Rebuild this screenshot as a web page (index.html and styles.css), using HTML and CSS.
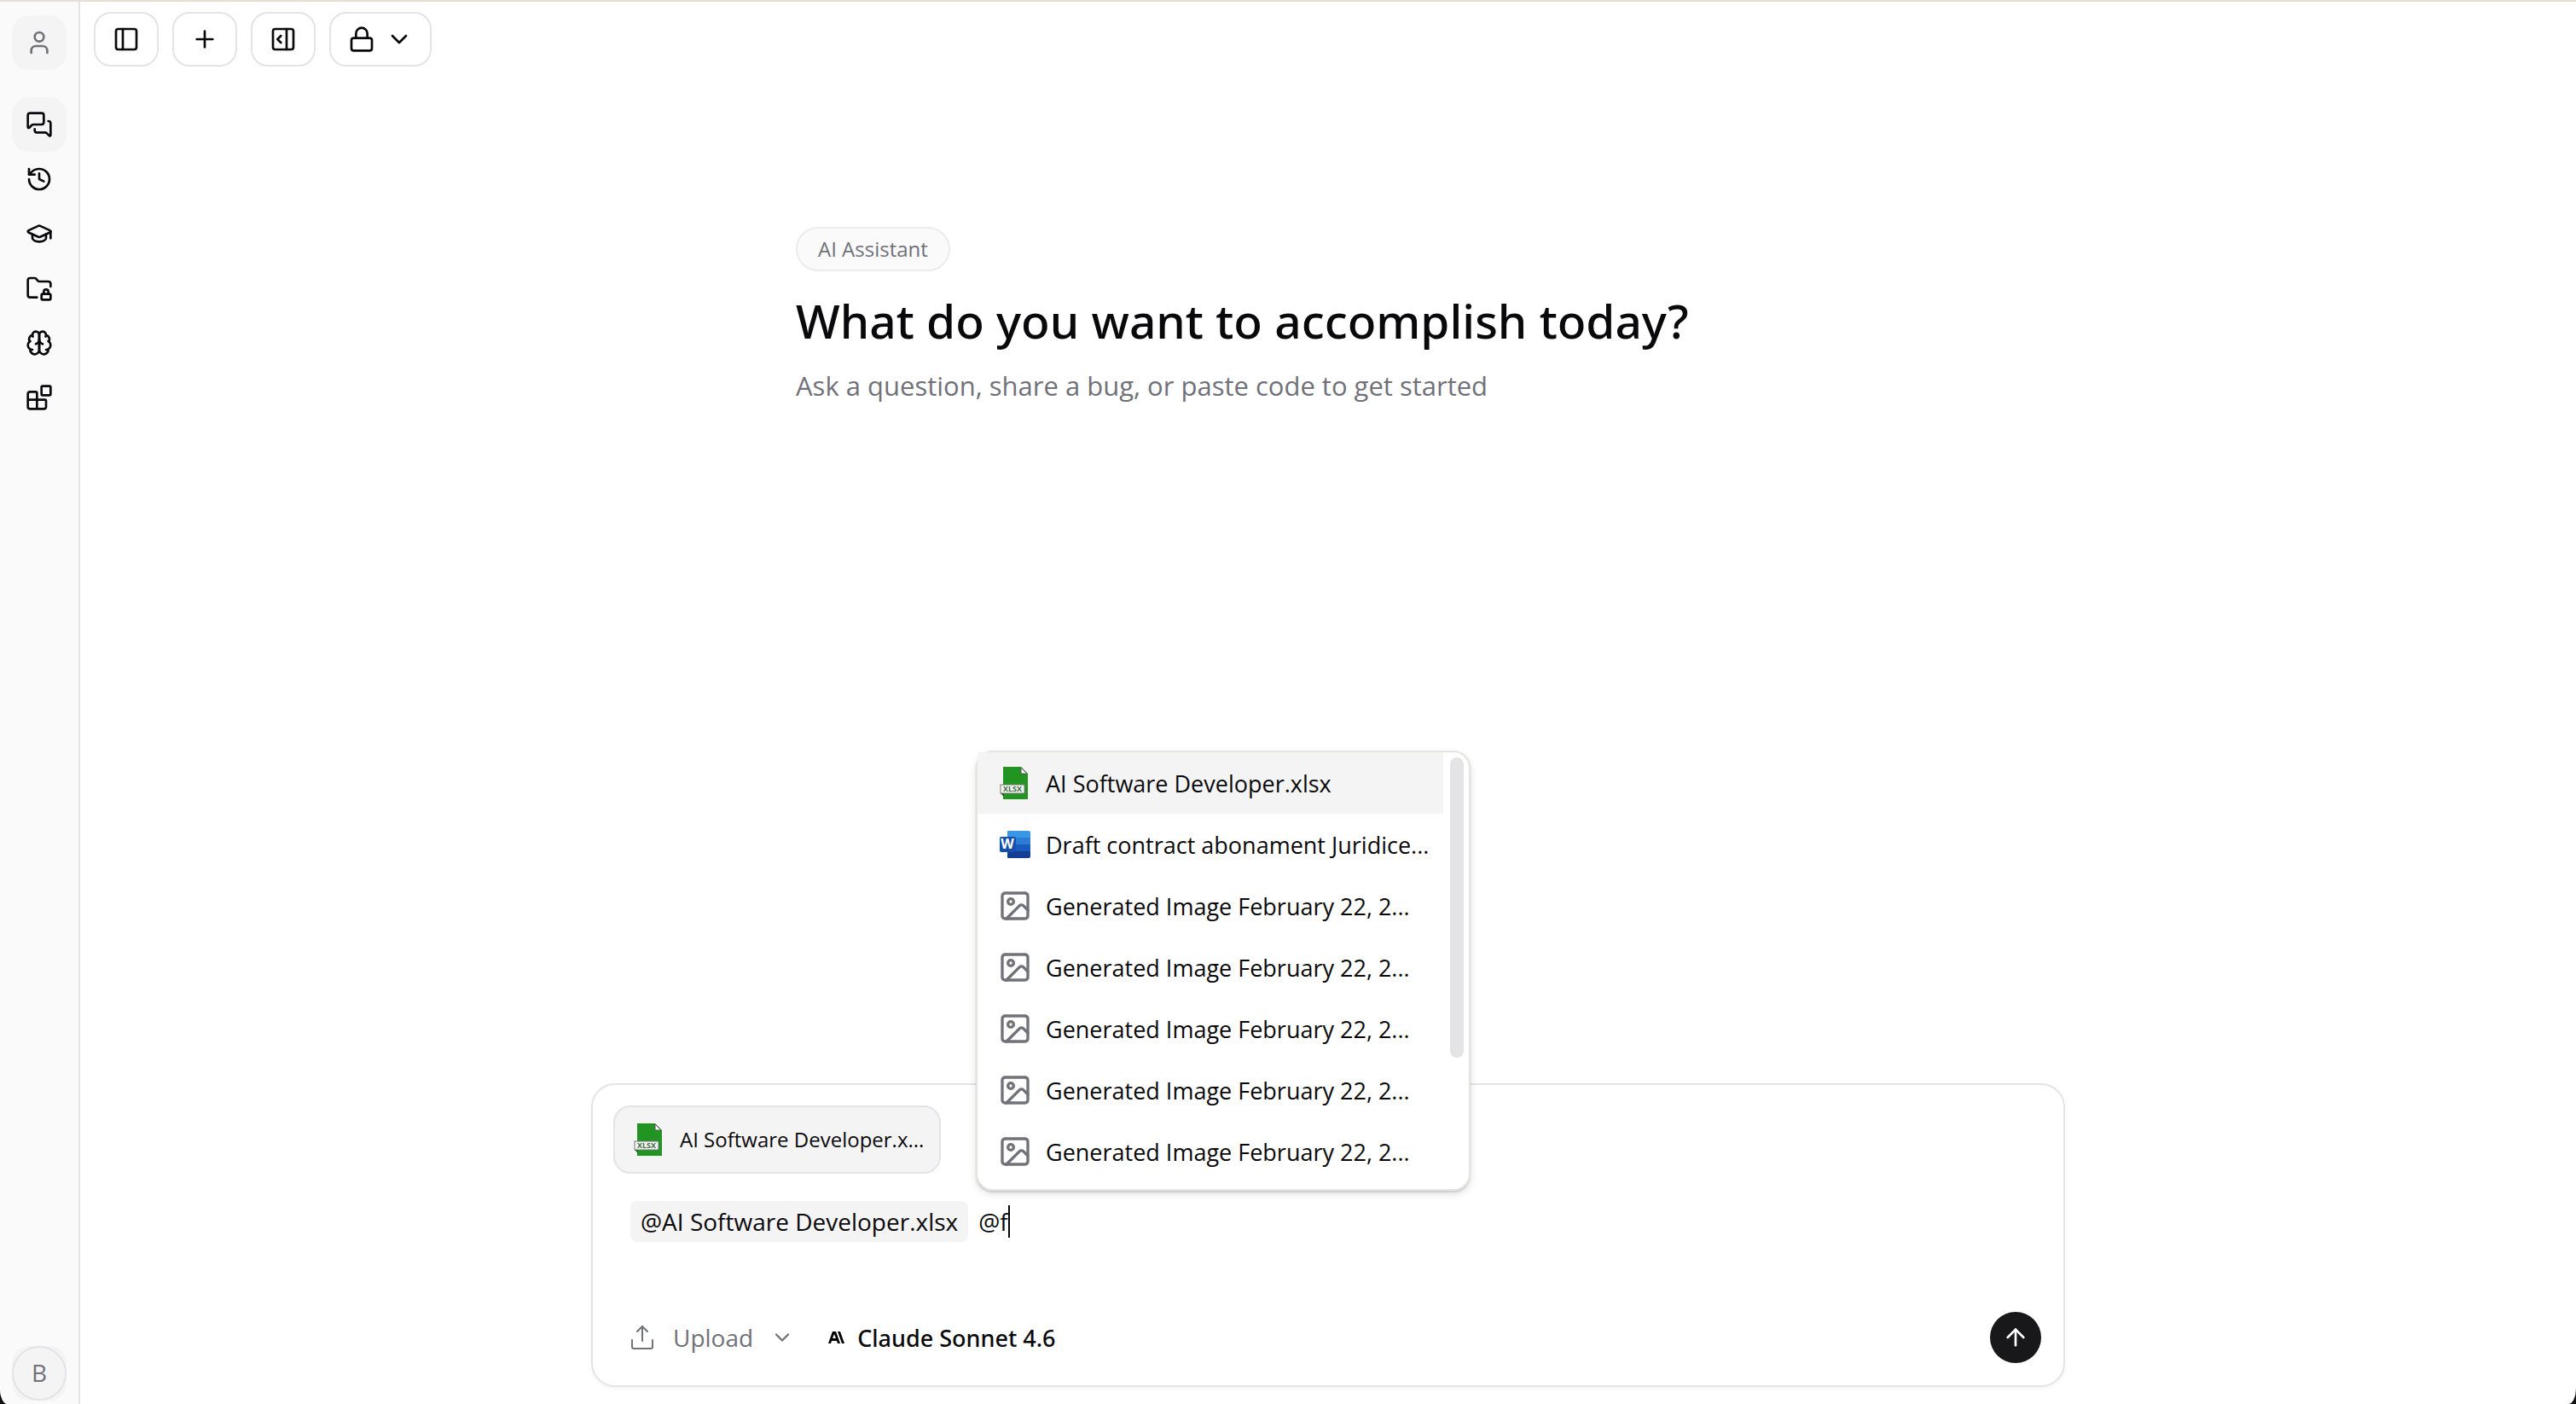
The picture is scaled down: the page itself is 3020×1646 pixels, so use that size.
FILE: index.html
```html
<!DOCTYPE html>
<html lang="en">
<head>
<meta charset="utf-8">
<title>AI Assistant</title>
<link rel="stylesheet" href="styles.css">
</head>
<body>

<!-- shared icons -->
<svg width="0" height="0" class="sprite" aria-hidden="true">
	<symbol id="image" viewBox="0 0 24 24">
		<rect width="18" height="18" x="3" y="3" rx="2"/>
		<circle cx="9" cy="9" r="2"/>
		<path d="m21 15-3.086-3.086a2 2 0 0 0-2.828 0L6 21"/>
	</symbol>
</svg>

<div class="app">
	<nav class="sidebar">
		<button class="side-btn active muted" aria-label="Profile">
			<svg class="icon" viewBox="0 0 24 24"><path d="M19 21v-2a4 4 0 0 0-4-4H9a4 4 0 0 0-4 4v2"/><circle cx="12" cy="7" r="4"/></svg>
		</button>
		<div class="side-menu">
			<a href="#" class="side-btn active" aria-label="Chats">
				<svg class="icon" viewBox="0 0 24 24"><path d="M16 10a2 2 0 0 1-2 2H6.828a2 2 0 0 0-1.414.586l-2.202 2.202A.71.71 0 0 1 2 14.286V4a2 2 0 0 1 2-2h10a2 2 0 0 1 2 2z"/><path d="M20 9a2 2 0 0 1 2 2v10.286a.71.71 0 0 1-1.212.502l-2.202-2.202A2 2 0 0 0 17.172 19H10a2 2 0 0 1-2-2v-1"/></svg>
			</a>
			<a href="#" class="side-btn" aria-label="History">
				<svg class="icon" viewBox="0 0 24 24"><path d="M3 12a9 9 0 1 0 9-9 9.750 9.750 0 0 0-6.740 2.740L3 8"/><path d="M3 3v5h5"/><path d="M12 7v5l4 2"/></svg>
			</a>
			<a href="#" class="side-btn" aria-label="Learning">
				<svg class="icon" viewBox="0 0 24 24"><path d="M21.420 10.922a1 1 0 0 0-.019-1.838L12.830 5.180a2 2 0 0 0-1.660 0L2.600 9.080a1 1 0 0 0 0 1.832l8.570 3.908a2 2 0 0 0 1.660 0z"/><path d="M22 10v6"/><path d="M6 12.500V16a6 3 0 0 0 12 0v-3.500"/></svg>
			</a>
			<a href="#" class="side-btn" aria-label="Private files">
				<svg class="icon" viewBox="0 0 24 24"><rect width="8" height="5" x="14" y="17" rx="1"/><path d="M10 20H4a2 2 0 0 1-2-2V5a2 2 0 0 1 2-2h3.900a2 2 0 0 1 1.690.9l.81 1.200a2 2 0 0 0 1.670.9H20a2 2 0 0 1 2 2v2.500"/><path d="M20 17v-2a2 2 0 1 0-4 0v2"/></svg>
			</a>
			<a href="#" class="side-btn" aria-label="Memory">
				<svg class="icon" viewBox="0 0 24 24"><path d="M12 5a3 3 0 1 0-5.997.125 4 4 0 0 0-2.526 5.770 4 4 0 0 0 .556 6.588A4 4 0 1 0 12 18Z"/><path d="M12 5a3 3 0 1 1 5.997.125 4 4 0 0 1 2.526 5.770 4 4 0 0 1-.556 6.588A4 4 0 1 1 12 18Z"/><path d="M15 13a4.500 4.500 0 0 1-3-4 4.500 4.500 0 0 1-3 4"/><path d="M17.599 6.500a3 3 0 0 0 .399-1.375"/><path d="M6.003 5.125A3 3 0 0 0 6.401 6.500"/><path d="M3.477 10.896a4 4 0 0 1 .585-.396"/><path d="M19.938 10.500a4 4 0 0 1 .585.396"/><path d="M6 18a4 4 0 0 1-1.967-.516"/><path d="M19.967 17.484A4 4 0 0 1 18 18"/></svg>
			</a>
			<a href="#" class="side-btn" aria-label="Integrations">
				<svg class="icon" viewBox="0 0 24 24"><rect width="8" height="8" x="14" y="2" rx="1"/><path d="M10 22V8a1 1 0 0 0-1-1H4a2 2 0 0 0-2 2v11a2 2 0 0 0 2 2h12a2 2 0 0 0 2-2v-5a1 1 0 0 0-1-1H2"/></svg>
			</a>
		</div>
		<button class="side-btn active account" aria-label="Account"><span class="avatar">B</span></button>
	</nav>

	<main class="main">
		<header class="toolbar">
			<button class="tool-btn" aria-label="Toggle sidebar">
				<svg class="icon" viewBox="0 0 24 24"><rect width="18" height="18" x="3" y="3" rx="2"/><path d="M9 3v18"/></svg>
			</button>
			<button class="tool-btn" aria-label="New chat">
				<svg class="icon" viewBox="0 0 24 24"><path d="M5 12h14"/><path d="M12 5v14"/></svg>
			</button>
			<button class="tool-btn" aria-label="Open panel">
				<svg class="icon" viewBox="0 0 24 24"><rect width="18" height="18" x="3" y="3" rx="2"/><path d="M15 3v18"/><path d="m10 15-3-3 3-3"/></svg>
			</button>
			<button class="tool-btn" aria-label="Privacy">
				<svg class="icon" viewBox="0 0 24 24"><rect width="18" height="11" x="3" y="11" rx="2"/><path d="M7 11V7a5 5 0 0 1 10 0v4"/></svg>
				<svg class="icon" viewBox="0 0 24 24"><path d="m6 9 6 6 6-6"/></svg>
			</button>
		</header>

		<section class="hero">
			<span class="pill">AI Assistant</span>
			<h1>What do you want to accomplish today?</h1>
			<p>Ask a question, share a bug, or paste code to get started</p>
		</section>

		<div class="composer">
			<div class="file-chip">
				<svg class="file-icon" viewBox="0 0 40 40">
					<path fill="#219421" d="M6 1h21l8 8v30H6z"/>
					<path fill="#fff" stroke="#555" d="M27 2v7h7z"/>
					<path fill="#175c17" d="M3 32h4v4z"/>
					<rect x="3" y="22" width="28" height="10" fill="#f4f4f4" stroke="#777"/>
					<text x="17" y="30" text-anchor="middle" class="xlsx">XLSX</text>
				</svg>
				<span>AI Software Developer.x...</span>
			</div>
			<div class="editor" role="textbox" aria-label="Message" contenteditable="true" spellcheck="false"><span class="mention">@AI Software Developer.xlsx</span><span class="typed">@f</span><span class="caret"></span></div>
			<div class="actions">
				<button class="upload">
					<svg class="icon" viewBox="0 0 32 32"><path d="M16 20V3"/><path d="m10 9 6-6 6 6"/><path d="M4 19v8a2 2 0 0 0 2 2h20a2 2 0 0 0 2-2v-8"/></svg>
					Upload
					<svg class="icon small" viewBox="0 0 24 24"><path d="m6 9 6 6 6-6"/></svg>
				</button>
				<button class="model">
					<svg class="logo" viewBox="0 0 20 14"><path fill-rule="evenodd" d="M5 0h4l5 14h-3l-1-3H4l-1 3H0zM7 3 5 8h4zM11 0h3l5 14h-3z"/></svg>
					Claude Sonnet 4.6
				</button>
				<button class="send" aria-label="Send">
					<svg class="icon" viewBox="0 0 24 24"><path d="m5 12 7-7 7 7"/><path d="M12 19V5"/></svg>
				</button>
			</div>

			<div class="picker">
				<ul class="picker-list">
					<li class="selected">
						<svg class="file-icon" viewBox="0 0 40 40">
							<path fill="#219421" d="M6 1h21l8 8v30H6z"/>
							<path fill="#fff" stroke="#555" d="M27 2v7h7z"/>
							<path fill="#175c17" d="M3 32h4v4z"/>
							<rect x="3" y="22" width="28" height="10" fill="#f4f4f4" stroke="#777"/>
							<text x="17" y="30" text-anchor="middle" class="xlsx">XLSX</text>
						</svg>
						AI Software Developer.xlsx
					</li>
					<li>
						<svg class="file-icon" viewBox="0 0 40 40">
							<path fill="#3a97e4" d="M12 4h24a2 2 0 0 1 2 2v6H11V5a1 1 0 0 1 1-1z"/>
							<path fill="#2b7cd3" d="M11 12h27v8H11z"/>
							<path fill="#185abd" d="M11 20h27v8H11z"/>
							<path fill="#123f91" d="M11 28h27v6a2 2 0 0 1-2 2H12a1 1 0 0 1-1-1z"/>
							<rect x="2" y="11" width="19" height="18" rx="2" fill="#1650ab"/>
							<text x="11" y="25" text-anchor="middle" class="word">W</text>
						</svg>
						Draft contract abonament Juridice...
					</li>
					<li><svg class="file-icon image"><use href="#image"/></svg>Generated Image February 22, 2...</li>
					<li><svg class="file-icon image"><use href="#image"/></svg>Generated Image February 22, 2...</li>
					<li><svg class="file-icon image"><use href="#image"/></svg>Generated Image February 22, 2...</li>
					<li><svg class="file-icon image"><use href="#image"/></svg>Generated Image February 22, 2...</li>
					<li><svg class="file-icon image"><use href="#image"/></svg>Generated Image February 22, 2...</li>
				</ul>
				<div class="track"><div class="thumb"></div></div>
			</div>
		</div>
	</main>
</div>

</body>
</html>
```

FILE: styles.css
```css
* {
	box-sizing: border-box;
}

html {
	background: #111;
}

body {
	margin: 0;
	font-family: "Open Sans", "Noto Sans", sans-serif;
	font-size: 28px;
	color: #09090b;
}

button {
	font: inherit;
	color: inherit;
	background: none;
	border: 0;
	padding: 0;
}

.sprite {
	position: absolute;
}

.app {
	display: flex;
	min-height: 100vh;
	background: #fff;
	border-top: 2px solid #e4e1d2;
	border-radius: 0 0 9px 9px / 0 0 18px 18px;
	overflow: hidden;
}

.icon {
	width: 32px;
	height: 32px;
	flex: none;
	fill: none;
	stroke: currentColor;
	stroke-width: 2;
	stroke-linecap: round;
	stroke-linejoin: round;
}

/* sidebar */
.sidebar {
	display: flex;
	flex-direction: column;
	align-items: center;
	width: 94px;
	flex: none;
	padding: 16px 0 4px;
	background: #fafafa;
	border-right: 2px solid #e4e4e7;
}

.side-menu {
	margin-top: 32px;
}

.side-btn {
	display: flex;
	align-items: center;
	justify-content: center;
	width: 64px;
	height: 64px;
	border-radius: 20px;
	color: inherit;
}

.active {
	background: #f4f4f5;
}

.muted {
	color: #71717a;
}

.account {
	margin-top: auto;
}

.avatar {
	width: 64px;
	height: 64px;
	line-height: 58px;
	border: 2px solid #e4e4e7;
	border-radius: 50%;
	color: #71717a;
	text-align: center;
}

/* main area */
.main {
	display: flex;
	flex-direction: column;
	flex: 1;
	padding-bottom: 20px;
}

.toolbar {
	display: flex;
	gap: 16px;
	padding: 12px 16px;
}

.tool-btn {
	display: flex;
	align-items: center;
	gap: 12px;
	height: 64px;
	padding: 0 20px;
	border: 2px solid #e4e4e7;
	border-radius: 20px;
	background: #fff;
}

.hero {
	width: 100%;
	max-width: 1248px;
	margin: 176px auto 0;
}

.pill {
	display: inline-block;
	padding: 0 24px;
	line-height: 48px;
	font-size: 24px;
	color: #71717a;
	background: #fafafa;
	border: 2px solid #ececee;
	border-radius: 26px;
}

.hero h1 {
	margin: 22px 0 0;
	font-family: "Noto Sans", "Open Sans", sans-serif;
	font-size: 55px;
	font-weight: 500;
	line-height: 72px;
}

.hero p {
	margin: 16px 0 0;
	font-size: 31px;
	line-height: 48px;
	color: #71717a;
}

/* composer */
.composer {
	position: relative;
	display: flex;
	flex-direction: column;
	width: 100%;
	max-width: 1728px;
	min-height: 356px;
	margin: auto auto 0;
	padding: 24px 24px 26px;
	border: 2px solid #e4e4e7;
	border-radius: 28px;
	box-shadow: 0 2px 4px rgba(0, 0, 0, 0.05);
}

.file-chip {
	display: flex;
	align-items: center;
	align-self: flex-start;
	gap: 16px;
	width: 384px;
	height: 80px;
	padding: 0 20px;
	font-size: 24px;
	line-height: 32px;
	white-space: nowrap;
	background: #f4f4f5;
	border: 2px solid #e4e4e7;
	border-radius: 20px;
}

.file-icon {
	width: 40px;
	height: 40px;
	flex: none;
}

.xlsx {
	font-size: 9px;
	font-weight: 700;
	fill: #3c6b3c;
}

.word {
	font-size: 16px;
	font-weight: 700;
	fill: #fff;
}

.editor {
	display: flex;
	align-items: center;
	padding: 32px 20px 0;
	outline: none;
}

.mention {
	padding: 0 12px;
	line-height: 48px;
	background: #f4f4f5;
	border-radius: 8px;
}

.typed {
	margin-left: 12px;
}

.caret {
	width: 2px;
	height: 38px;
	background: #000;
}

.actions {
	display: flex;
	align-items: center;
	margin-top: auto;
	padding: 0 2px 0 18px;
}

.upload {
	display: flex;
	align-items: center;
	gap: 20px;
	color: #71717a;
}

.small {
	width: 28px;
	height: 28px;
}

.model {
	display: flex;
	align-items: center;
	gap: 14px;
	margin-left: 40px;
	font-family: "Noto Sans", "Open Sans", sans-serif;
	font-size: 27px;
	font-weight: 500;
}

.logo {
	width: 20px;
	height: 14px;
}

.send {
	display: flex;
	align-items: center;
	justify-content: center;
	width: 60px;
	height: 60px;
	margin-left: auto;
	border-radius: 50%;
	background: #18181b;
	color: #fff;
}

/* file picker, floats above the composer */
.picker {
	position: absolute;
	left: 449px;
	bottom: 228px;
	display: flex;
	width: 580px;
	height: 516px;
	font-size: 27px;
	background: #fff;
	border: 2px solid #e4e4e1;
	border-radius: 20px;
	box-shadow: 0 4px 10px rgba(0, 0, 0, 0.12), 0 2px 2px rgba(0, 0, 0, 0.12);
}

.picker-list {
	flex: 1;
	margin: 0;
	padding: 0;
	list-style: none;
}

.picker-list li {
	display: flex;
	align-items: center;
	gap: 16px;
	height: 72px;
	padding-left: 24px;
	white-space: nowrap;
}

.selected {
	background: #f4f4f5;
}

.image {
	fill: none;
	stroke: #71717a;
	stroke-width: 2;
	stroke-linecap: round;
	stroke-linejoin: round;
}

.track {
	width: 30px;
	padding: 6px 6px 6px 8px;
}

.thumb {
	height: 352px;
	border-radius: 8px;
	background: #e4e4e7;
}
```
